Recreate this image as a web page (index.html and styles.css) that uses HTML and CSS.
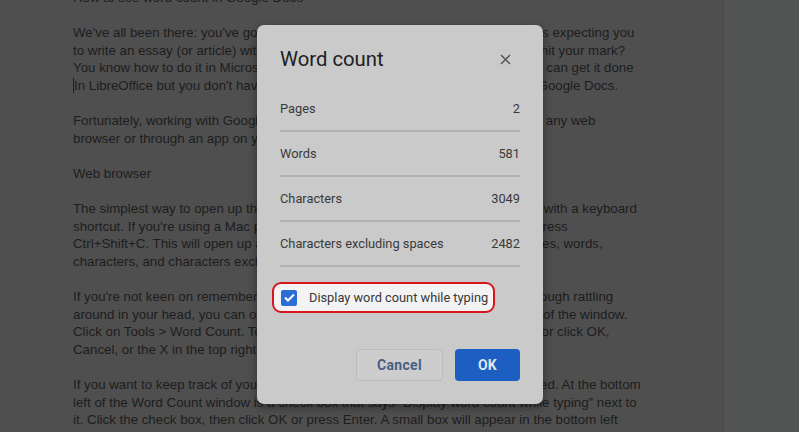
FILE: index.html
```html
<!DOCTYPE html>
<html lang="en">
<head>
  <meta charset="UTF-8" />
  <meta name="viewport" content="width=device-width,initial-scale=1" />
  <title>Word count in Google Docs</title>
  <link rel="stylesheet" href="styles.css">
</head>
<body>

  <div class="screen">
    <main class="doc">
      <p class="doc-title">How to see word count in Google Docs</p>
      <p>We've all been there: you've got a tight deadline and your teacher or your boss is expecting you<br>
        to write an essay (or article) with a specified word count. How do you know you hit your mark?<br>
        You know how to do it in Microsoft Word, and you'll probably also know how you can get it done<br>
        <span class="caret"></span>In LibreOffice but you don't have a clue how to find the word count when using Google Docs.</p>
      <p>Fortunately, working with Google Docs word count is easy, whether you're using any web<br>
        browser or through an app on your phone.</p>
      <p>Web browser</p>
      <p>The simplest way to open up the built-in word count tools in Google Docs is just with a keyboard<br>
        shortcut. If you're using a Mac press Command+Shift+C, or on a Windows PC press<br>
        Ctrl+Shift+C. This will open up a little window that shows you the number of pages, words,<br>
        characters, and characters excluding spaces.</p>
      <p>If you're not keen on remembering keyboard shortcuts or you'd already have enough rattling<br>
        around in your head, you can open it up from the tools menu bar at the very top of the window.<br>
        Click on Tools &gt; Word Count. To close the window once you're done, press Esc or click OK,<br>
        Cancel, or the X in the top right corner.</p>
      <p>If you want to keep track of yous word count as you type, keep it always displayed. At the bottom<br>
        left of the Word Count window is a check box that says “Display word count while typing” next to<br>
        it. Click the check box, then click OK or press Enter. A small box will appear in the bottom left</p>
    </main>
    <aside class="side"></aside>
  </div>

  <div class="dialog" role="dialog" aria-label="Word count">
    <div class="dlg-head">
      <h2>Word count</h2>
      <button class="close" aria-label="Close">
        <svg width="11" height="11" viewBox="0 0 11 11"><path d="M1 1l9 9M10 1l-9 9" stroke="#555" stroke-width="1.5" fill="none"/></svg>
      </button>
    </div>

    <ul class="stats">
      <li><span>Pages</span><span>2</span></li>
      <li><span>Words</span><span>581</span></li>
      <li><span>Characters</span><span>3049</span></li>
      <li><span>Characters excluding spaces</span><span>2482</span></li>
    </ul>

    <label class="typing">
      <span class="check">
        <svg width="11" height="9" viewBox="0 0 11 9"><path d="M1 4.5l3 3L10 1.5" stroke="#fff" stroke-width="2" fill="none"/></svg>
      </span>
      Display word count while typing
    </label>

    <div class="actions">
      <button class="btn cancel">Cancel</button>
      <button class="btn ok">OK</button>
    </div>
  </div>

</body>
</html>
```

FILE: styles.css
```css
:root {
  --page:   #4f4f4f;
  --ink:    #1d1d1d;
  --panel:  #cacaca;
  --line:   #b2b2b2;
  --blue:   #1c5ec2;
  --red:    #d8141c;
}
* { box-sizing: border-box; margin:0; padding:0; }
body {
  background: var(--page);
  font-family: 'Liberation Sans', Arial, sans-serif;
  overflow: hidden;
}

/* Document behind the dialog */
.screen {
  display:flex; height:432px; overflow:hidden;
}
.doc {
  flex:1;
  padding-left:73px;
  color: var(--ink);
  font-size:13.3px; line-height:17.6px;
  white-space:nowrap;
}
.doc p { margin-bottom:17.6px; }
.doc .doc-title { margin-top:-11px; }
.caret {
  display:inline-block; width:1px; height:15px;
  background: var(--ink); vertical-align:-3px;
}
.side {
  width:76px;
  background:#525353;
  border-left:1px solid #4c4c4c;
}

/* Word count dialog */
.dialog {
  position:absolute; left:257px; top:25px;
  width:286px; height:379px;
  background: var(--panel);
  border-radius:7px;
  box-shadow: 0 3px 10px rgba(0,0,0,.4);
  font-family: Roboto, 'Liberation Sans', sans-serif;
}
.dlg-head {
  display:flex; justify-content:space-between; align-items:center;
  height:62px; padding:6px 23px 0;
}
.dlg-head h2 {
  font-size:20.3px; font-weight:400; color:#202020;
}
.close {
  width:22px; height:22px; margin-right:4px;
  display:flex; align-items:center; justify-content:center;
  background:none; border:none; cursor:pointer;
}

.stats { list-style:none; padding:0 23px; }
.stats li {
  display:flex; justify-content:space-between; align-items:center;
  height:45px;
  border-bottom:2px solid var(--line);
  font-size:12.8px; color:#3a3a3a;
}

.typing {
  display:flex; align-items:center; gap:12px;
  width:223px; height:31px;
  margin:15px 0 0 15px; padding-left:7px;
  background:#f3f3f3;
  border:2px solid var(--red); border-radius:9px;
  font-size:12.8px; color:#383838;
  white-space:nowrap;
}
.check {
  flex:none;
  width:16px; height:16px; border-radius:2px;
  background:#2b6dd4;
  display:flex; align-items:center; justify-content:center;
}

.actions {
  display:flex; justify-content:flex-end; gap:12px;
  padding:36px 23px 0;
}
.btn {
  height:32px; border-radius:4px;
  font-family: Roboto, sans-serif; font-size:14px; font-weight:700;
  letter-spacing:.3px; cursor:pointer;
}
.btn.cancel {
  width:87px;
  background:#cdcdcd; color:#466085;
  border:1px solid #bcbcbc;
}
.btn.ok {
  width:65px;
  background: var(--blue); color:#dfe5ef;
  border:none;
}
```
